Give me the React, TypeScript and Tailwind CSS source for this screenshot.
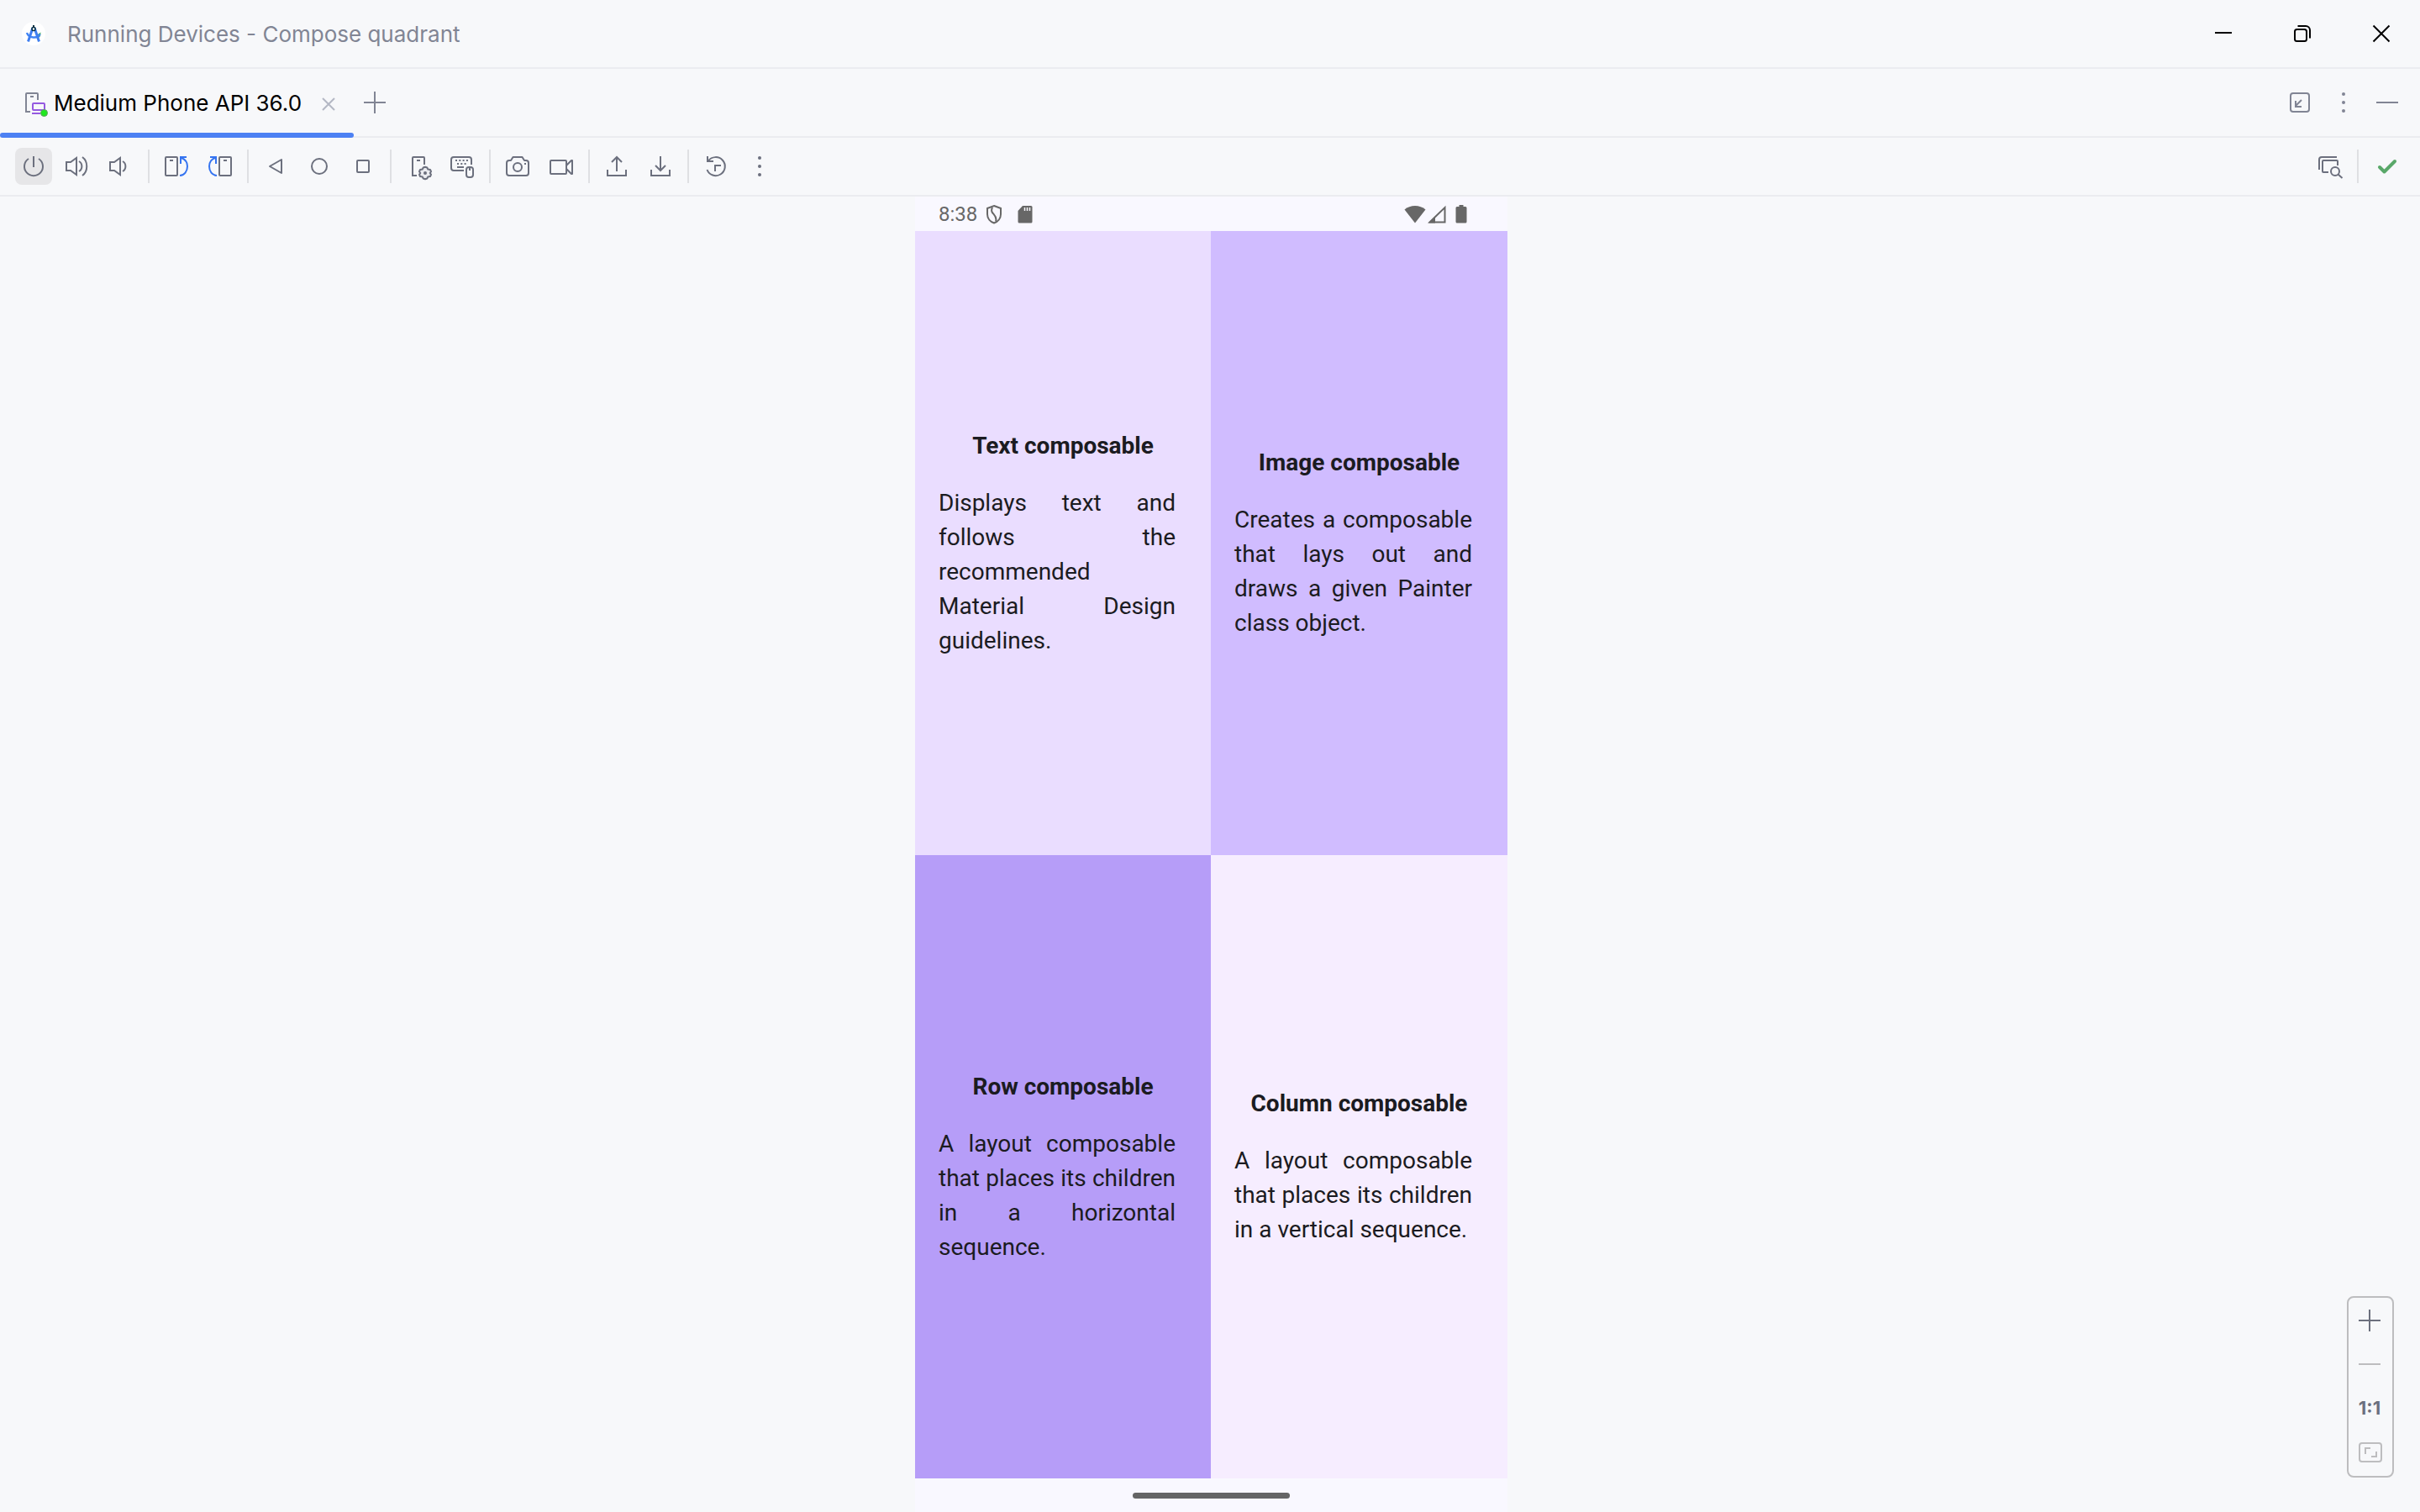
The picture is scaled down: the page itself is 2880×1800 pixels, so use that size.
import React from "react";

type IconProps = { children: React.ReactNode; className?: string };

function Icon({ children, className = "text-[#6c707e]" }: IconProps) {
  return (
    <svg
      aria-hidden="true"
      viewBox="0 0 40 40"
      fill="none"
      stroke="currentColor"
      strokeWidth={2}
      className={`block size-10 shrink-0 ${className}`}
    >
      {children}
    </svg>
  );
}

function IconButton({
  label,
  active = false,
  children,
}: {
  label: string;
  active?: boolean;
  children: React.ReactNode;
}) {
  return (
    <button
      type="button"
      aria-label={label}
      title={label}
      className={`flex size-11 shrink-0 items-center justify-center rounded-lg ${
        active ? "bg-[#e6e6e8]" : "hover:bg-[#ebecf0]"
      }`}
    >
      {children}
    </button>
  );
}

function Separator() {
  return <div className="mx-0.5 h-10 w-0.5 shrink-0 bg-[#dfe0e3]" />;
}

const Speaker = <path d="M7 15H12L19 10V30L12 25H7Z" />;

const Dots = (
  <g fill="currentColor" stroke="none">
    <circle cx="20" cy="10" r="2" />
    <circle cx="20" cy="20" r="2" />
    <circle cx="20" cy="30" r="2" />
  </g>
);

const RotateLeft = (
  <>
    <rect x="7" y="9" width="14" height="22" rx="1" />
    <path d="M12 13H16" />
    <path className="text-[#3574f0]" stroke="currentColor" d="M24 9H32M25 9V17M26 10C31 12 33 16 33 20C33 26 29.500 30.500 24 31" />
  </>
);

const gearPath =
  "M28 20.800L30.300 21.500L31.300 23.600L34 24L35 26.200L33.800 28L35 29.900L34 32L31.300 32.400L30.300 34.500L28 35.200L25.700 34.500L24.700 32.400L22 32L21 29.900L22.200 28L21 26.200L22 24L24.700 23.600L25.700 21.500Z";

function TitleBar() {
  return (
    <header className="flex h-[82px] items-center justify-between border-b-2 border-[#ebecf0] pr-[26px] pl-5">
      <div className="flex items-center gap-5">
        <Icon>
          <circle cx="20" cy="20" r="14" fill="#fff" stroke="none" />
          <path d="M24 21.500L28.500 18.500L28 23L26 25Z" fill="#34a853" stroke="none" />
          <path d="M12 19C14 25.500 25 26.500 27.500 20.500" stroke="#4285f4" strokeWidth="2.500" />
          <path d="M19 13L13.500 29.500M21 13L26.500 29.500" stroke="#3f7ff0" strokeWidth="3" />
          <path d="M20 10V13" stroke="#073042" strokeWidth="2" />
          <circle cx="20" cy="14.500" r="2" fill="#fff" stroke="#073042" strokeWidth="1.500" />
        </Icon>
        <h1 className="pt-0.5 text-[26px] leading-8 text-[#818594]">Running Devices - Compose quadrant</h1>
      </div>
      <div className="flex items-center gap-[54px]">
        <button type="button" aria-label="Minimize">
          <Icon className="text-black">
            <path d="M10 19H30" />
          </Icon>
        </button>
        <button type="button" aria-label="Restore">
          <Icon className="text-black">
            <rect x="11" y="15" width="14" height="14" rx="2.500" />
            <path d="M14.500 11H24A5 5 0 0 1 29 16V25.500" />
          </Icon>
        </button>
        <button type="button" aria-label="Close">
          <Icon className="text-black">
            <path d="M10.500 10.500L29.500 29.500M29.500 10.500L10.500 29.500" />
          </Icon>
        </button>
      </div>
    </header>
  );
}

function TabBar() {
  return (
    <div className="flex h-[82px] items-stretch justify-between border-b-2 border-[#ebecf0] pr-[17px]">
      <div className="flex items-center">
        <div role="tablist" className="relative flex items-center self-stretch pr-2.5 pl-[22px]">
          <button type="button" role="tab" aria-selected="true" className="flex items-center gap-0.5">
            <Icon className="text-[#818594]">
              <path d="M14 31H9V10A1 1 0 0 1 10 9H22A1 1 0 0 1 23 10V17M14 13H18" />
              <g stroke="#955ae0">
                <rect x="17" y="21" width="14" height="8" rx="1" />
                <path d="M16 33H26" />
              </g>
              <circle cx="30.500" cy="32.500" r="4" fill="#1ee81e" stroke="#5fa05f" strokeWidth="1" />
            </Icon>
            <span className="pt-0.5 text-[26px] leading-8 text-black">Medium Phone API 36.0</span>
          </button>
          <button type="button" aria-label="Close tab" className="ml-3 pt-1">
            <Icon className="text-[#b4b8c4]">
              <path d="M13 13L27 27M27 13L13 27" />
            </Icon>
          </button>
          <div className="absolute -bottom-0.5 left-0 h-1.5 w-full rounded-full bg-[#4d81f3]" />
        </div>
        <button type="button" aria-label="New tab" className="ml-[5px]">
          <Icon className="text-[#818594]">
            <path d="M7 20H33M20 7V33" />
          </Icon>
        </button>
      </div>
      <div className="flex items-center gap-2">
        <IconButton label="Dock window">
          <Icon className="text-[#818594]">
            <rect x="9" y="9" width="22" height="22" rx="3" />
            <path d="M22 17L15 24M15 18V25H22" />
          </Icon>
        </IconButton>
        <IconButton label="Options">
          <Icon className="text-[#818594]">{Dots}</Icon>
        </IconButton>
        <IconButton label="Hide">
          <Icon className="text-[#818594]">
            <path d="M7 20H33" />
          </Icon>
        </IconButton>
      </div>
    </div>
  );
}

function Toolbar() {
  return (
    <div role="toolbar" className="flex h-[70px] items-center justify-between border-b-2 border-[#ebecf0] pr-[19px] pl-[18px]">
      <div className="flex items-center gap-2">
        <IconButton label="Power" active>
          <Icon>
            <path d="M14 11A11 11 0 1 0 26 11M20 8V21" />
          </Icon>
        </IconButton>
        <IconButton label="Volume up">
          <Icon>
            {Speaker}
            <path d="M22 14C26.500 16.500 26.500 23.500 22 26M26 9C33 14 33 26 26 31" />
          </Icon>
        </IconButton>
        <IconButton label="Volume down">
          <Icon>
            {Speaker}
            <path d="M22 14C26.500 16.500 26.500 23.500 22 26" />
          </Icon>
        </IconButton>
        <Separator />
        <IconButton label="Rotate left">
          <Icon>{RotateLeft}</Icon>
        </IconButton>
        <IconButton label="Rotate right">
          <Icon>
            <g transform="matrix(-1 0 0 1 40 0)">{RotateLeft}</g>
          </Icon>
        </IconButton>
        <Separator />
        <IconButton label="Back">
          <Icon>
            <path strokeLinejoin="round" d="M27 12V28L13 20Z" />
          </Icon>
        </IconButton>
        <IconButton label="Home">
          <Icon>
            <circle cx="20" cy="20" r="9" />
          </Icon>
        </IconButton>
        <IconButton label="Overview">
          <Icon>
            <rect x="13" y="13" width="14" height="14" rx="1" />
          </Icon>
        </IconButton>
        <Separator />
        <IconButton label="Device settings">
          <Icon>
            <path d="M18 31H13V10A1 1 0 0 1 14 9H26A1 1 0 0 1 27 10V18M18 13H22" />
            <path d={gearPath} fill="#ebecf0" strokeLinejoin="round" />
            <circle cx="28" cy="28" r="2" fill="currentColor" stroke="none" />
          </Icon>
        </IconButton>
        <IconButton label="Hardware input">
          <Icon>
            <path d="M22 25H10A3 3 0 0 1 7 22V12A3 3 0 0 1 10 9H28A3 3 0 0 1 31 12V18M14 21H22" />
            <path d="M12 13H28" strokeDasharray="2 2.300" />
            <path d="M14 17H26" strokeDasharray="2 2.300" />
            <rect x="25" y="21" width="8" height="12" rx="3" />
            <path d="M29 21V25" />
          </Icon>
        </IconButton>
        <Separator />
        <IconButton label="Take screenshot">
          <Icon>
            <path d="M7 16A3 3 0 0 1 10 13H12L14.500 9H25.500L28 13H30A3 3 0 0 1 33 16V28A3 3 0 0 1 30 31H10A3 3 0 0 1 7 28Z" strokeLinejoin="round" />
            <circle cx="20" cy="21" r="5" />
            <path d="M28 17H30" />
          </Icon>
        </IconButton>
        <IconButton label="Record screen">
          <Icon>
            <rect x="7" y="13" width="19" height="16" rx="1" />
            <path strokeLinejoin="round" d="M26 19L32 13H33V29H32L26 23" />
          </Icon>
        </IconButton>
        <Separator />
        <IconButton label="Upload">
          <Icon>
            <path d="M9 24V31H31V24M20 26V9M14 15L20 9L26 15" />
          </Icon>
        </IconButton>
        <IconButton label="Download">
          <Icon>
            <path d="M9 24V31H31V24M20 8V25M14 19L20 25L26 19" />
          </Icon>
        </IconButton>
        <Separator />
        <IconButton label="Snapshots">
          <Icon>
            <path d="M10 8V14H17M11 13.500A11 11 0 1 1 9.500 24M19 26V19H26" />
          </Icon>
        </IconButton>
        <IconButton label="More">
          <Icon>{Dots}</Icon>
        </IconButton>
      </div>
      <div className="flex items-center gap-2">
        <IconButton label="Layout inspector">
          <Icon>
            <path d="M7 24V12A3 3 0 0 1 10 9H28M18 27H12A1 1 0 0 1 11 26V14A1 1 0 0 1 12 13H28A1 1 0 0 1 29 14V19" />
            <circle cx="26" cy="26" r="5" />
            <path d="M29.500 29.500L34.500 34" />
          </Icon>
        </IconButton>
        <Separator />
        <IconButton label="Connected">
          <Icon className="text-[#59a869]">
            <path strokeWidth="4" strokeLinecap="round" strokeLinejoin="round" d="M13 21L18.500 26.500L31 14" />
          </Icon>
        </IconButton>
      </div>
    </div>
  );
}

function StatusBar() {
  return (
    <div className="flex h-[41px] items-center justify-between pr-12 pl-7 text-[#676767]">
      <div className="flex items-center">
        <span className="font-['Roboto',sans-serif] text-2xl leading-7">8:38</span>
        <svg aria-hidden="true" viewBox="0 0 20 24" fill="none" stroke="currentColor" strokeWidth="2" className="ml-2.5 h-6 w-5">
          <path d="M10 2L18 5V12C18 17 14.500 21 10 22.500C5.500 21 2 17 2 12V5Z" />
          <path d="M8 4C4 12 15 12 12 20.500" strokeWidth="2" />
        </svg>
        <svg aria-hidden="true" viewBox="0 0 18 22" className="ml-[18px] h-[22px] w-[18px]">
          <path d="M6 1H16A1.500 1.500 0 0 1 17.500 2.500V20A1.500 1.500 0 0 1 16 21.500H2A1.500 1.500 0 0 1 .5 20V7Z" fill="currentColor" />
          <path d="M8.500 3V7M11.500 3V7M14.500 3V7" stroke="#f9f8ff" strokeWidth="1.500" />
        </svg>
      </div>
      <div className="flex items-center">
        <svg aria-hidden="true" viewBox="0 0 26 22" className="h-[22px] w-[26px]">
          <path d="M13 21.500L.5 5.500C7 -.5 19 -.5 25.500 5.500Z" fill="currentColor" />
        </svg>
        <svg aria-hidden="true" viewBox="0 0 22 22" className="ml-0.5 h-[22px] w-[22px]">
          <path d="M2.500 20.500L20.500 3V20.500Z" fill="none" stroke="currentColor" strokeWidth="2" />
          <path d="M1 21.500L9 13.500V21.500Z" fill="currentColor" />
        </svg>
        <svg aria-hidden="true" viewBox="0 0 14 22" className="ml-[11px] h-[22px] w-3.5">
          <path d="M4.500 0H9.500V2H12A1.500 1.500 0 0 1 13.500 3.500V20A1.500 1.500 0 0 1 12 21.500H2A1.500 1.500 0 0 1 .5 20V3.500A1.500 1.500 0 0 1 2 2H4.500Z" fill="currentColor" />
        </svg>
      </div>
    </div>
  );
}

function Quadrant({
  title,
  lines,
  tail,
  className,
}: {
  title: string;
  lines: string[];
  tail: string;
  className: string;
}) {
  return (
    <section className={`flex flex-col justify-center px-7 ${className}`}>
      <h2 className="pb-[27px] text-center text-[28px] leading-[41px] font-bold">{title}</h2>
      <p className="pr-3.5 text-[28px] leading-[41px]">
        {lines.map((line) => (
          <span
            key={line}
            className={`block whitespace-nowrap ${line.includes(" ") ? "[text-align-last:justify]" : ""}`}
          >
            {line}{" "}
          </span>
        ))}
        <span className="block whitespace-nowrap">{tail}</span>
      </p>
    </section>
  );
}

function PhoneScreen() {
  return (
    <div className="flex w-full max-w-[705px] flex-col bg-[#f9f8ff]">
      <StatusBar />
      <div className="grid flex-1 grid-cols-[352fr_353fr] grid-rows-2 font-['Roboto',sans-serif] text-[#1b1b21]">
        <Quadrant
          title="Text composable"
          lines={["Displays text and", "follows the", "recommended", "Material Design"]}
          tail="guidelines."
          className="bg-[#eaddff]"
        />
        <Quadrant
          title="Image composable"
          lines={["Creates a composable", "that lays out and", "draws a given Painter"]}
          tail="class object."
          className="bg-[#d0bcff]"
        />
        <Quadrant
          title="Row composable"
          lines={["A layout composable", "that places its children", "in a horizontal"]}
          tail="sequence."
          className="bg-[#b69df8]"
        />
        <Quadrant
          title="Column composable"
          lines={["A layout composable", "that places its children"]}
          tail="in a vertical sequence."
          className="bg-[#f6edff]"
        />
      </div>
      <div className="flex h-10 items-center justify-center">
        <div className="h-[7px] w-[187px] rounded-full bg-[#656565]" />
      </div>
    </div>
  );
}

function ZoomControls() {
  return (
    <div className="absolute right-[31px] bottom-[41px] flex w-14 flex-col items-start gap-2 rounded-lg border-2 border-[#bdbdbf] pt-[5px] pb-[7px] pl-[3px]">
      <IconButton label="Zoom in">
        <Icon>
          <path d="M7 20H33M20 7V33" />
        </Icon>
      </IconButton>
      <IconButton label="Zoom out">
        <Icon className="text-[#bdbdbf]">
          <path d="M7 20H33" />
        </Icon>
      </IconButton>
      <button type="button" className="h-11 w-11 text-[22px] leading-[44px] font-bold text-[#6c707e]">
        1:1
      </button>
      <IconButton label="Fit to window">
        <Icon className="text-[#bdbdbf]">
          <rect x="8" y="10" width="26" height="22" rx="3" />
          <path d="M15 23V16H21M22 26H28V20" />
        </Icon>
      </IconButton>
    </div>
  );
}

export default function App() {
  return (
    <div className="flex min-h-screen flex-col bg-[#f7f8fa] font-['Inter',sans-serif]">
      <TitleBar />
      <TabBar />
      <Toolbar />
      <main className="relative flex flex-1 justify-center pl-[3px]">
        <PhoneScreen />
        <ZoomControls />
      </main>
    </div>
  );
}
